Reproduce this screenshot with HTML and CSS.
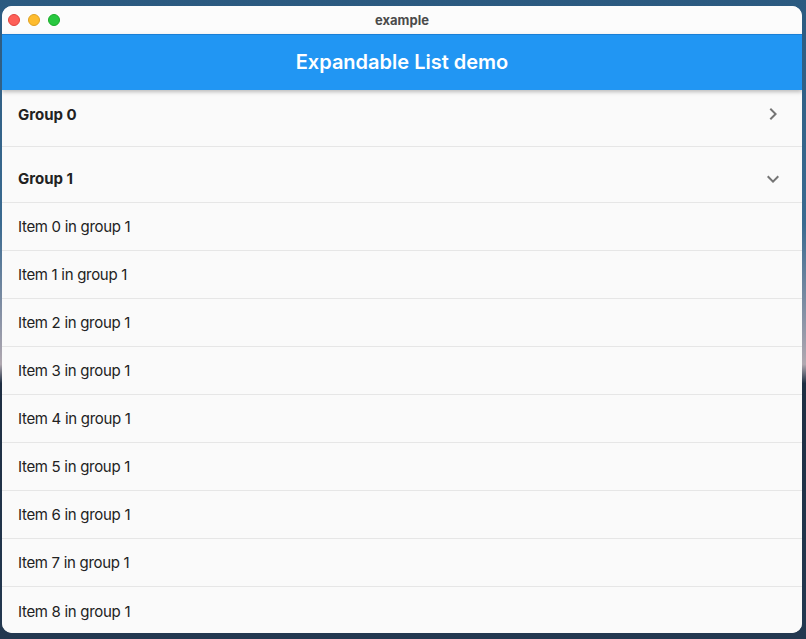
FILE: index.html
```html
<!DOCTYPE html>
<html>
<head>
<meta charset="utf-8">
<link rel="stylesheet" href="styles.css">
</head>
<body>
<div class="window">
  <div class="titlebar">
    <div class="lights">
      <span class="light red"></span>
      <span class="light yellow"></span>
      <span class="light green"></span>
    </div>
    <div class="wintitle">example</div>
  </div>
  <div class="appbar">Expandable List demo</div>
  <div class="list">
    <div class="group group0">
      <span class="group-label">Group 0</span>
      <svg class="chev" width="24" height="24" viewBox="0 0 24 24"><path d="M10 6 8.59 7.41 13.17 12l-4.58 4.59L10 18l6-6z" fill="#757575"/></svg>
    </div>
    <div class="group group1">
      <span class="group-label">Group 1</span>
      <svg class="chev" width="24" height="24" viewBox="0 0 24 24"><path d="M16.59 8.59 12 13.17 7.41 8.59 6 10l6 6 6-6z" fill="#757575"/></svg>
    </div>
    <div class="item">Item 0 in group 1</div>
    <div class="item">Item 1 in group 1</div>
    <div class="item">Item 2 in group 1</div>
    <div class="item">Item 3 in group 1</div>
    <div class="item">Item 4 in group 1</div>
    <div class="item">Item 5 in group 1</div>
    <div class="item">Item 6 in group 1</div>
    <div class="item">Item 7 in group 1</div>
    <div class="item last">Item 8 in group 1</div>
  </div>
</div>
</body>
</html>
```
FILE: styles.css
```css
html, body {
  margin: 0;
  height: 100%;
}
body {
  box-sizing: border-box;
  padding: 6px 4px 6px 2px;
  background: linear-gradient(to bottom, #2b5a80 0%, #3a6a90 35%, #8a93a6 50%, #b0a8b0 57%, #1e2e42 60%, #233850 100%);
  font-family: Inter, "Noto Sans", sans-serif;
  overflow: hidden;
}
.window {
  height: 627px;
  border-radius: 10px;
  overflow: hidden;
  display: flex;
  flex-direction: column;
  background: #fafafa;
}
.titlebar {
  height: 28px;
  flex: none;
  background: #fcfcfc;
  display: flex;
  align-items: center;
  position: relative;
}
.lights {
  display: flex;
  gap: 8px;
  padding-left: 6px;
}
.light {
  width: 12px;
  height: 12px;
  border-radius: 50%;
  box-sizing: border-box;
}
.red { background: #fe5f57; border: 0.5px solid #e0443e; }
.yellow { background: #febc2e; border: 0.5px solid #dea123; }
.green { background: #28c840; border: 0.5px solid #1aab29; }
.wintitle {
  position: absolute;
  left: 0;
  right: 0;
  top: 0;
  line-height: 28px;
  text-align: center;
  font-size: 13px;
  font-weight: 700;
  color: #4b4b4b;
}
.appbar {
  height: 56px;
  flex: none;
  background: #2196f3;
  color: #fff;
  font-size: 20px;
  font-weight: 600;
  display: flex;
  align-items: center;
  justify-content: center;
  box-shadow: 0 2px 4px rgba(0,0,0,0.25);
  position: relative;
  z-index: 1;
  padding-bottom: 1px;
  box-sizing: border-box;
  border-top: 1px solid #1a7fd6;
}
.list {
  flex: 1;
  overflow: hidden;
  background: #fafafa;
}
.group {
  display: flex;
  align-items: center;
  justify-content: space-between;
  padding: 0 17px 0 16px;
  box-sizing: border-box;
  border-bottom: 1px solid #e6e6e6;
}
.group0 {
  height: 57px;
  padding-bottom: 8px;
}
.group1 {
  height: 56px;
  padding-top: 8px;
}
.group-label {
  font-size: 15px;
  font-weight: 700;
  color: #222;
}
.item {
  height: 48px;
  box-sizing: border-box;
  border-bottom: 1px solid #e6e6e6;
  padding-left: 16px;
  display: flex;
  align-items: center;
  font-size: 15px;
  letter-spacing: -0.3px;
  color: #222;
}
.item.last {
  border-bottom: none;
}
```
